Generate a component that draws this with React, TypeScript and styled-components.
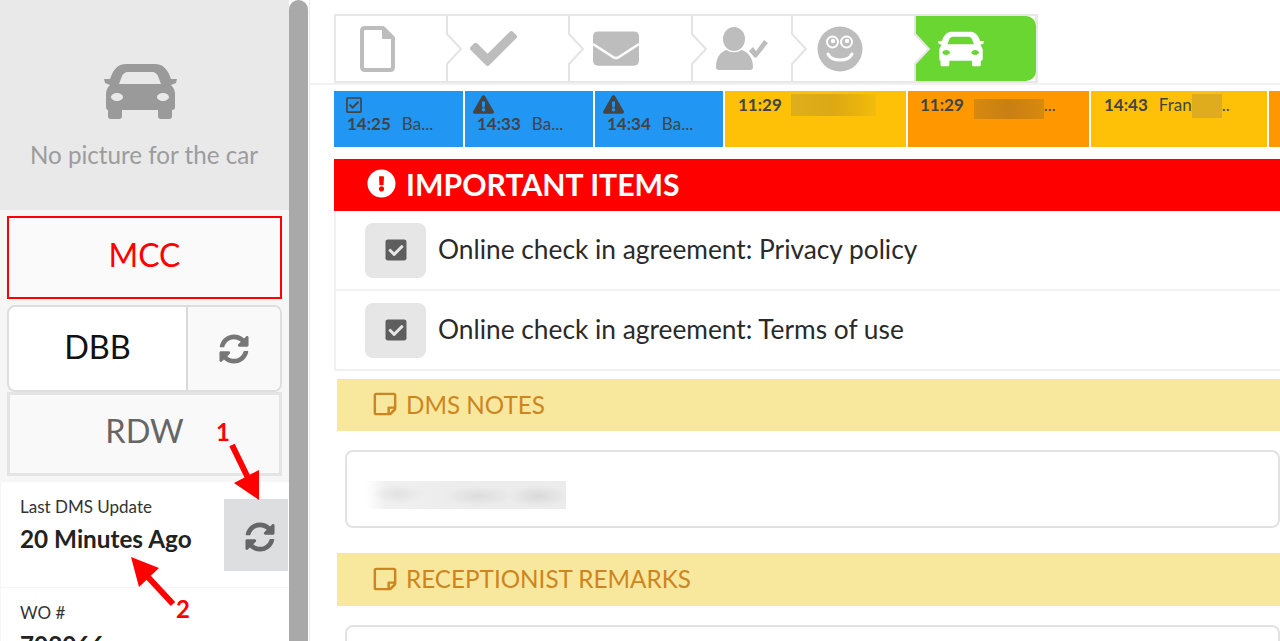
import React from 'react'
import styled, { createGlobalStyle } from 'styled-components'
import {
  FaCheck,
  FaCheckSquare,
  FaExclamationCircle,
  FaExclamationTriangle,
  FaRegCheckSquare,
  FaRegStickyNote,
  FaSyncAlt,
} from 'react-icons/fa'

const GlobalStyle = createGlobalStyle`
  html, body {
    margin: 0;
    padding: 0;
    background: #fff;
    font-family: Lato, "Open Sans", sans-serif;
    color: #222;
  }
`

const Page = styled.div`
  position: relative;
  display: flex;
  width: 1280px;
  height: 641px;
  overflow: hidden;
`

const Sidebar = styled.aside`
  flex: 0 0 289px;
  display: flex;
  flex-direction: column;
  background: #f6f6f6;
`

const Scrollbar = styled.div`
  flex: 0 0 20px;
  border-right: 1px solid #ececec;
  background: #fff;
`

const ScrollThumb = styled.div`
  width: 19px;
  height: 100%;
  border-radius: 10px 10px 0 0;
  background: #a9a9a9;
`

const CarPanel = styled.div`
  height: 210px;
  flex: none;
  box-sizing: border-box;
  padding-top: 64px;
  display: flex;
  flex-direction: column;
  align-items: center;
  background: #e9e9e9;
  color: #9a9a9a;
`

const CarWrap = styled.div`
  display: flex;
  margin-right: 8px;
`

const NoPicture = styled.div`
  margin-top: 21px;
  margin-right: 1px;
  font-size: 24.2px;
  line-height: 30px;
  color: #9c9c9c;
`

const BoxStack = styled.div`
  display: flex;
  flex-direction: column;
  padding: 6px 7px 6px;
`

const McCBox = styled.div`
  height: 83px;
  box-sizing: border-box;
  display: flex;
  align-items: center;
  justify-content: center;
  margin-bottom: 6px;
  padding-bottom: 7px;
  border: 2px solid #ff0000;
  background: #fafafa;
  color: #ff0000;
  font-size: 32px;
`

const DbbBox = styled.div`
  height: 87px;
  box-sizing: border-box;
  display: flex;
  border: 2px solid #dedede;
  border-radius: 8px;
  overflow: hidden;
  background: #fff;
`

const DbbLabel = styled.div`
  flex: 0 0 179px;
  display: flex;
  align-items: center;
  justify-content: center;
  padding-bottom: 4px;
  box-sizing: border-box;
  border-right: 2px solid #d9d9d9;
  color: #111;
  font-size: 32.5px;
`

const DbbRefresh = styled.div`
  flex: 1;
  display: flex;
  align-items: center;
  justify-content: center;
  background: #f9f9f9;
  color: #777;
  font-size: 30px;
`

const RdwBox = styled.div`
  height: 84px;
  box-sizing: border-box;
  display: flex;
  align-items: center;
  justify-content: center;
  padding-bottom: 7px;
  border: 3px solid #e4e4e4;
  background: #f9f9f9;
  color: #666;
  font-size: 32.5px;
`

const InfoRow = styled.div<{ $height: number }>`
  height: ${(p) => p.$height}px;
  flex: none;
  box-sizing: border-box;
  display: flex;
  justify-content: space-between;
  margin-left: 1px;
  margin-bottom: 1px;
  background: #fff;
`

const InfoText = styled.div`
  padding: 14px 0 0 19px;
`

const InfoLabel = styled.div`
  font-size: 17px;
  line-height: 22px;
  color: #333;
`

const InfoValue = styled.div`
  margin-top: 6px;
  font-size: 24.3px;
  line-height: 30px;
  font-weight: 700;
  color: #222;
`

const UpdateButton = styled.div`
  width: 64px;
  height: 72px;
  margin: 17px 1px 0 0;
  box-sizing: border-box;
  padding: 4px 0 0 7px;
  display: flex;
  align-items: center;
  justify-content: center;
  background: #dcdee0;
  color: #666;
  font-size: 30px;
`

const Main = styled.main`
  flex: 1;
  min-width: 0;
  display: flex;
  flex-direction: column;
`

const StepperBar = styled.div`
  flex: none;
  height: 85px;
  box-sizing: border-box;
  padding: 14px 0 0 24px;
  border-bottom: 2px solid #f2f2f2;
`

const Stepper = styled.div`
  display: flex;
  width: 704px;
  height: 69px;
  box-sizing: border-box;
  border: 2px solid #e8e8e8;
  border-right-width: 3px;
`

const Step = styled.div<{ $width: number; $active?: boolean }>`
  position: relative;
  flex: 0 0 ${(p) => p.$width}px;
  box-sizing: border-box;
  display: flex;
  align-items: center;
  color: ${(p) => (p.$active ? '#fff' : '#bdbdbd')};
  background: ${(p) => (p.$active ? '#69d631' : '#fff')};
  border-radius: ${(p) => (p.$active ? '0 10px 10px 0' : '0')};
`

const StepIcon = styled.div<{ $left: number }>`
  margin-left: ${(p) => p.$left}px;
  display: flex;
`

const Chevron = styled.svg`
  position: absolute;
  left: -1px;
  top: 0;
`

const Tickets = styled.div`
  flex: none;
  display: flex;
  gap: 2px;
  height: 56px;
  margin: 6px 0 0 24px;
`

const Ticket = styled.div<{ $width: number; $color: string; $plain: boolean; $inset: number }>`
  flex: 0 0 ${(p) => p.$width}px;
  box-sizing: border-box;
  padding: ${(p) => (p.$plain ? '3px' : '5px')} 0 0 ${(p) => p.$inset}px;
  background: ${(p) => p.$color};
  color: #444;
  font-size: 17px;
  line-height: 21px;
  white-space: nowrap;
  overflow: hidden;
`

const TicketIcon = styled.div<{ $offset: number; $size: number }>`
  height: 17px;
  margin-left: ${(p) => p.$offset}px;
  display: flex;
  align-items: center;
  color: #444;
  font-size: ${(p) => p.$size}px;
`

const TicketLine = styled.div`
  height: 21px;
  display: flex;
  align-items: center;
  gap: 11px;
`

const TicketTime = styled.span`
  font-weight: 700;
`

const Redacted = styled.span<{ $width: number; $height: number; $shade: string; $shift?: number; $drop?: number }>`
  display: inline-block;
  width: ${(p) => p.$width}px;
  height: ${(p) => p.$height}px;
  margin: ${(p) => p.$drop ?? 0}px 0 ${(p) => -(p.$drop ?? 0)}px ${(p) => p.$shift ?? 0}px;
  background: ${(p) => p.$shade};
`

const NameWrap = styled.span`
  display: inline-flex;
  align-items: center;
`

const ImportantPanel = styled.section`
  flex: none;
  margin: 12px 0 0 24px;
  border-left: 2px solid #f0f0f0;
  border-bottom: 2px solid #f0f0f0;
`

const ImportantHeader = styled.div`
  height: 52px;
  box-sizing: border-box;
  margin-left: -2px;
  display: flex;
  align-items: center;
  gap: 10px;
  padding: 0 0 3px 33px;
  background: #ff0000;
  color: #fff;
  font-size: 30.2px;
  font-weight: 700;
`

const ImportantRow = styled.div<{ $last?: boolean }>`
  height: ${(p) => (p.$last ? 78 : 80)}px;
  box-sizing: border-box;
  display: flex;
  align-items: center;
  gap: 12px;
  padding-left: 29px;
  border-bottom: ${(p) => (p.$last ? 'none' : '2px solid #f2f2f2')};
  font-size: 26.3px;
  color: #2a2a2a;
`

const RowText = styled.span`
  margin-top: -2px;
`

const CheckTile = styled.div`
  width: 61px;
  height: 55px;
  display: flex;
  align-items: center;
  justify-content: center;
  border-radius: 8px;
  background: #e6e6e6;
  color: #5e5e5e;
  font-size: 24px;
`

const NoteSection = styled.section`
  flex: none;
  margin: 8px 0 0 27px;
`

const NoteHeader = styled.div<{ $height: number }>`
  height: ${(p) => p.$height}px;
  box-sizing: border-box;
  display: flex;
  align-items: center;
  gap: 8px;
  padding: 0 0 2px 35px;
  background: #f7e89d;
  color: #ce8521;
  font-size: 24.25px;
`

const NoteBox = styled.div`
  height: 78px;
  box-sizing: border-box;
  margin: 19px 0 25px 8px;
  padding: 29px 0 0 19px;
  border: 2px solid #e2e2e2;
  border-radius: 8px;
  background: #fff;
`

const BlurredNote = styled.div`
  width: 200px;
  height: 28px;
  background:
    radial-gradient(ellipse 26px 10px at 32px 13px, #e2e2e2 0%, rgba(226, 226, 226, 0) 100%),
    radial-gradient(ellipse 34px 10px at 112px 15px, #dcdcdc 0%, rgba(220, 220, 220, 0) 100%),
    radial-gradient(ellipse 30px 11px at 172px 15px, #d9d9d9 0%, rgba(217, 217, 217, 0) 100%),
    linear-gradient(90deg, #fff 0%, #f0f0f0 10%, #ececec 50%, #ececec 100%);
`

const Annotations = styled.svg`
  position: absolute;
  left: 0;
  top: 0;
  pointer-events: none;
`

const Marker = styled.span<{ $x: number; $y: number }>`
  position: absolute;
  left: ${(p) => p.$x}px;
  top: ${(p) => p.$y}px;
  color: #ff0000;
  font-size: 24px;
  line-height: 24px;
  font-weight: 700;
`

const CarIcon = ({ width, height }: { width: number; height: number }) => (
  <svg width={width} height={height} viewBox="0 0 73 55" fill="currentColor">
    <path
      fillRule="evenodd"
      d="M22 0H51C58 0 62 4 65 10L67 15H73L72 19L67 21C70 24 71 27 71 30V43C71 45 70 46 68 46V52C68 54 67 55 65 55H57C55 55 54 54 54 52V46H18V52C18 54 17 55 15 55H7C5 55 4 54 4 52V46C3 46 2 45 2 43V30C2 27 3 24 6 21L1 19L0 15H6L8 10C11 4 15 0 22 0ZM24 8C21 8 19 10 18 12L15 20H57L54 12C53 10 51 8 48 8ZM7 33C7 35 10 37 13 37C16 37 19 35 19 33C19 31 16 29 13 29C10 29 7 31 7 33ZM53 33C53 35 56 37 59 37C62 37 65 35 65 33C65 31 62 29 59 29C56 29 53 31 53 33Z"
    />
  </svg>
)

const FileIcon = () => (
  <svg width="35" height="48" viewBox="0 0 35 48" fill="none" stroke="currentColor" strokeWidth="4" strokeLinejoin="round">
    <path d="M5 3H23L33 13V42C33 44 32 45 30 45H5C3 45 2 44 2 42V6C2 4 3 3 5 3Z" />
    <path d="M23 3V13H33" fill="currentColor" strokeWidth="2" />
  </svg>
)

const EnvelopeIcon = () => (
  <svg width="46" height="36" viewBox="0 0 47 36" fill="currentColor">
    <rect x="0" y="0" width="47" height="35" rx="5" />
    <path d="M0 13L20 26C22 27.5 25 27.5 27 26L47 13" fill="none" stroke="#fff" strokeWidth="2.5" />
  </svg>
)

const UserCheckIcon = () => (
  <svg width="52" height="44" viewBox="0 0 52 44" fill="currentColor">
    <ellipse cx="18" cy="12" rx="11" ry="12" />
    <path d="M0 40C0 30 5 24 11 23C14 26 22 26 25 23C31 24 37 30 37 40C37 42 36 43 34 43H3C1 43 0 42 0 40Z" />
    <path d="M33 24L37 20L40 24L48 13L52 16L41 30C40 31 39 31 38 30Z" />
  </svg>
)

const SmileyIcon = () => (
  <svg width="46" height="46" viewBox="0 0 46 46">
    <circle cx="23" cy="23" r="22.5" fill="currentColor" />
    <circle cx="15.5" cy="16" r="5.5" fill="none" stroke="#fff" strokeWidth="2" />
    <circle cx="29.5" cy="16" r="5.5" fill="none" stroke="#fff" strokeWidth="2" />
    <circle cx="16" cy="15" r="2.2" fill="#fff" />
    <circle cx="30" cy="15" r="2.2" fill="#fff" />
    <path d="M11 28C15 36 31 36 35 28" fill="none" stroke="#fff" strokeWidth="3" strokeLinecap="round" />
  </svg>
)

const StepDivider = () => (
  <Chevron width="18" height="65" viewBox="0 0 18 65">
    <path d="M1 0V18L15 33L1 48V65H0V0Z" fill="#fff" />
    <path d="M1 0V18L15 33L1 48V65" fill="none" stroke="#e4e4e4" strokeWidth="2" />
  </Chevron>
)

const steps = [
  { width: 111, left: 24, icon: <FileIcon /> },
  { width: 122, left: 23, icon: <FaCheck size={47} /> },
  { width: 123, left: 24, icon: <EnvelopeIcon /> },
  { width: 100, left: 24, icon: <UserCheckIcon /> },
  { width: 123, left: 25, icon: <SmileyIcon /> },
  { width: 121, left: 23, icon: <CarIcon width={46} height={36} />, active: true },
]

type TicketData = {
  width: number
  color: string
  time: string
  name: React.ReactNode
  inset: number
  icon?: React.ReactNode
  offset?: number
  size?: number
}

const tickets: TicketData[] = [
  { width: 129, color: '#2196f3', time: '14:25', name: 'Ba...', inset: 13, icon: <FaRegCheckSquare />, offset: -2, size: 18 },
  { width: 128, color: '#2196f3', time: '14:33', name: 'Ba...', inset: 12, icon: <FaExclamationTriangle />, offset: -4, size: 21 },
  { width: 128, color: '#2196f3', time: '14:34', name: 'Ba...', inset: 12, icon: <FaExclamationTriangle />, offset: -4, size: 21 },
  {
    width: 181,
    color: '#ffc107',
    time: '11:29',
    inset: 13,
    name: <Redacted $width={85} $height={22} $shift={-2} $shade="linear-gradient(90deg, #dfae1c, #dba913 50%, #f3bb0c)" />,
  },
  {
    width: 181,
    color: '#ff9800',
    time: '11:29',
    inset: 12,
    name: (
      <NameWrap>
        <Redacted $width={70} $height={20} $shift={-1} $drop={4} $shade="linear-gradient(90deg, #d68a10, #c87f14 50%, #d88a0d)" />
        ...
      </NameWrap>
    ),
  },
  {
    width: 176,
    color: '#ffc107',
    time: '14:43',
    inset: 13,
    name: (
      <NameWrap>
        Fran
        <Redacted $width={30} $height={24} $drop={1} $shade="#deac1d" />
        ..
      </NameWrap>
    ),
  },
  { width: 40, color: '#ff9800', time: '', name: '', inset: 13 },
]

const App = () => (
  <Page>
    <GlobalStyle />
    <Sidebar>
      <CarPanel>
        <CarWrap>
          <CarIcon width={73} height={55} />
        </CarWrap>
        <NoPicture>No picture for the car</NoPicture>
      </CarPanel>
      <BoxStack>
        <McCBox>MCC</McCBox>
        <DbbBox>
          <DbbLabel>DBB</DbbLabel>
          <DbbRefresh>
            <FaSyncAlt />
          </DbbRefresh>
        </DbbBox>
        <RdwBox>RDW</RdwBox>
      </BoxStack>
      <InfoRow $height={105}>
        <InfoText>
          <InfoLabel>Last DMS Update</InfoLabel>
          <InfoValue>20 Minutes Ago</InfoValue>
        </InfoText>
        <UpdateButton>
          <FaSyncAlt />
        </UpdateButton>
      </InfoRow>
      <InfoRow $height={60}>
        <InfoText>
          <InfoLabel>WO #</InfoLabel>
          <InfoValue>702066</InfoValue>
        </InfoText>
      </InfoRow>
    </Sidebar>
    <Scrollbar>
      <ScrollThumb />
    </Scrollbar>
    <Main>
      <StepperBar>
        <Stepper>
          {steps.map((step, i) => (
            <Step key={i} $width={step.width} $active={step.active}>
              {i > 0 && <StepDivider />}
              <StepIcon $left={step.left}>{step.icon}</StepIcon>
            </Step>
          ))}
        </Stepper>
      </StepperBar>
      <Tickets>
        {tickets.map((ticket, i) => (
          <Ticket key={i} $width={ticket.width} $color={ticket.color} $plain={!ticket.icon} $inset={ticket.inset}>
            {ticket.icon && (
              <TicketIcon $offset={ticket.offset ?? 0} $size={ticket.size ?? 18}>
                {ticket.icon}
              </TicketIcon>
            )}
            <TicketLine>
              <TicketTime>{ticket.time}</TicketTime>
              {ticket.name}
            </TicketLine>
          </Ticket>
        ))}
      </Tickets>
      <ImportantPanel>
        <ImportantHeader>
          <FaExclamationCircle size={29} />
          IMPORTANT ITEMS
        </ImportantHeader>
        <ImportantRow>
          <CheckTile>
            <FaCheckSquare />
          </CheckTile>
          <RowText>Online check in agreement: Privacy policy</RowText>
        </ImportantRow>
        <ImportantRow $last>
          <CheckTile>
            <FaCheckSquare />
          </CheckTile>
          <RowText>Online check in agreement: Terms of use</RowText>
        </ImportantRow>
      </ImportantPanel>
      <NoteSection>
        <NoteHeader $height={52}>
          <FaRegStickyNote size={26} />
          DMS NOTES
        </NoteHeader>
        <NoteBox>
          <BlurredNote />
        </NoteBox>
        <NoteHeader $height={53}>
          <FaRegStickyNote size={26} />
          RECEPTIONIST REMARKS
        </NoteHeader>
        <NoteBox />
      </NoteSection>
    </Main>
    <Annotations width="1280" height="641" viewBox="0 0 1280 641">
      <path d="M232 445L250 482" stroke="#ff0000" strokeWidth="6" />
      <path d="M259 500L234 483L259 470Z" fill="#ff0000" />
      <path d="M173 604L147 576" stroke="#ff0000" strokeWidth="6" />
      <path d="M131 557L159 568L139 587Z" fill="#ff0000" />
    </Annotations>
    <Marker $x={216} $y={420}>1</Marker>
    <Marker $x={176} $y={597}>2</Marker>
  </Page>
)

export default App
